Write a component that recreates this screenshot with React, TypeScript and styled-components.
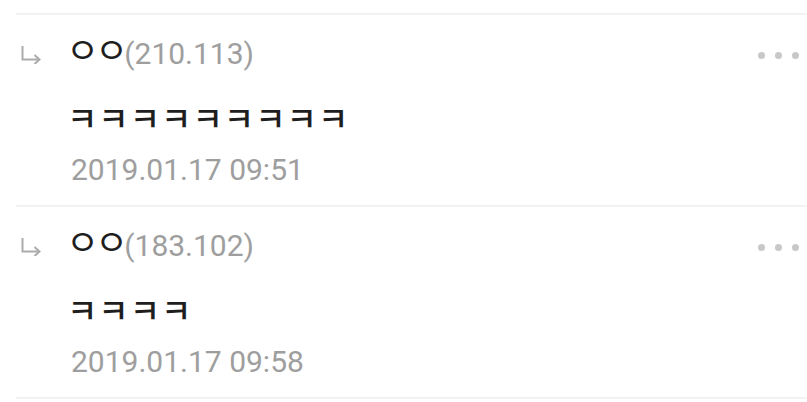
import styled, { createGlobalStyle } from 'styled-components';

const GlobalStyle = createGlobalStyle`
  html, body {
    margin: 0;
    padding: 0;
    background: #ffffff;
  }
  body {
    font-family: Roboto, "Noto Sans CJK KR", sans-serif;
  }
`;

type Reply = {
  name: string;
  ip: string;
  text: string;
  date: string;
};

const replies: Reply[] = [
  { name: 'ㅇㅇ', ip: '(210.113)', text: 'ㅋㅋㅋㅋㅋㅋㅋㅋㅋ', date: '2019.01.17 09:51' },
  { name: 'ㅇㅇ', ip: '(183.102)', text: 'ㅋㅋㅋㅋ', date: '2019.01.17 09:58' },
];

function ReplyArrow() {
  return (
    <svg width="20" height="18" viewBox="0 0 20 18" fill="none" stroke="#ababab" strokeWidth="2">
      <path d="M1.5 0 V13.5 H18" />
      <path d="M13.5 9 L18.5 13.5 L13.5 18" />
    </svg>
  );
}

function ReplyList() {
  return (
    <List>
      {replies.map((r) => (
        <Row key={r.ip}>
          <ArrowCell>
            <ReplyArrow />
          </ArrowCell>
          <Body>
            <Header>
              <Name>{r.name}</Name>
              <Ip>{r.ip}</Ip>
            </Header>
            <Text>{r.text}</Text>
            <Date>{r.date}</Date>
          </Body>
          <More>
            <Dot />
            <Dot />
            <Dot />
          </More>
        </Row>
      ))}
    </List>
  );
}

export default function App() {
  return (
    <>
      <GlobalStyle />
      <ReplyList />
    </>
  );
}

const List = styled.div`
  margin: 13px 0 0 16px;
  border-top: 2px solid #f2f2f2;
`;

const Row = styled.div`
  display: flex;
  height: 190px;
  border-bottom: 2px solid #f2f2f2;
`;

const ArrowCell = styled.div`
  width: 55px;
  padding: 31px 0 0 5px;
  box-sizing: border-box;
  flex-shrink: 0;
`;

const Body = styled.div`
  flex: 1;
  display: flex;
  flex-direction: column;
  padding-top: 19px;
`;

const Header = styled.div`
  font-size: 30px;
  line-height: 40px;
  height: 40px;
  white-space: nowrap;
`;

const Name = styled.span`
  margin-left: -5px;
  font-size: 36px;
  line-height: 20px;
  letter-spacing: -4px;
  color: #1e1e1e;
  font-family: "Noto Sans CJK KR", sans-serif;
`;

const Ip = styled.span`
  color: #9e9e9e;
`;

const Text = styled.div`
  margin: 23px 0 0 -4px;
  font-size: 33px;
  letter-spacing: 1px;
  font-weight: 500;
  line-height: 40px;
  color: #1e1e1e;
  font-family: "Noto Sans CJK KR", sans-serif;
`;

const Date = styled.div`
  margin-top: 13px;
  font-size: 30px;
  line-height: 40px;
  color: #9e9e9e;
`;

const More = styled.div`
  display: flex;
  gap: 10px;
  padding: 37px 8px 0 0;
  align-self: flex-start;
`;

const Dot = styled.span`
  width: 7px;
  height: 7px;
  border-radius: 50%;
  background: #c8c8c8;
`;
